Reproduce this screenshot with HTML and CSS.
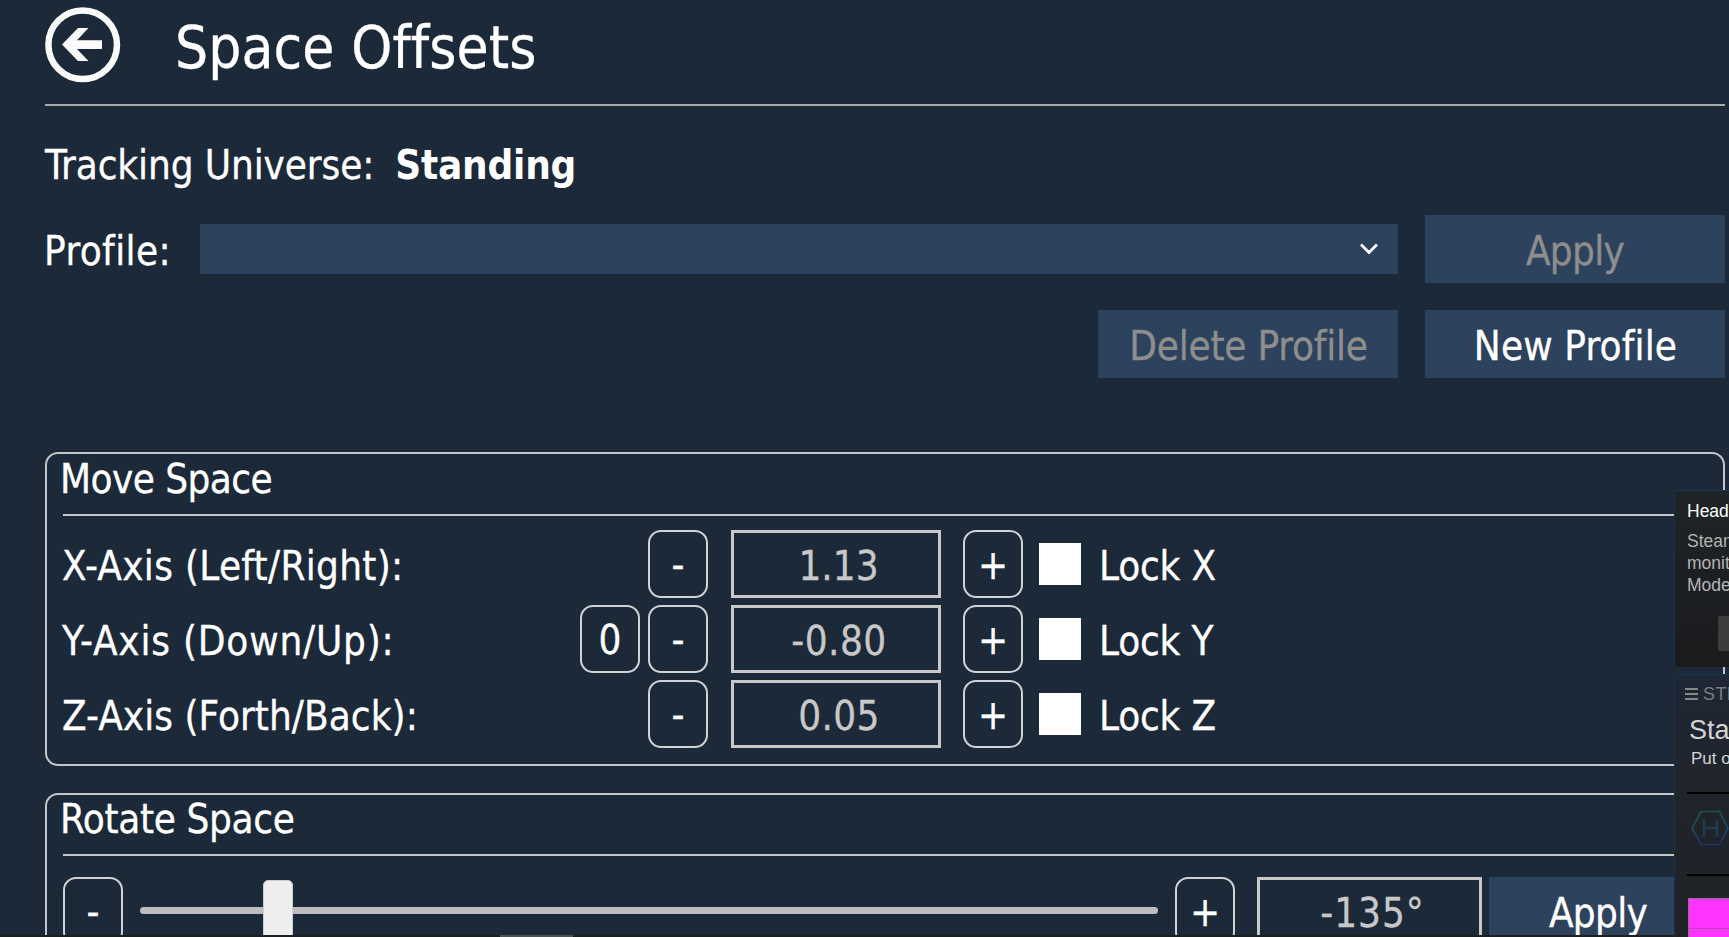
FILE: index.html
```html
<!DOCTYPE html>
<html lang="en">
<head>
<meta charset="utf-8">
<title>Space Offsets</title>
<link rel="stylesheet" href="styles.css">
</head>
<body>
<main class="page">
  <header class="header">
    <svg class="back" viewBox="0 0 76 76"><circle cx="37.7" cy="37.7" r="34.3" fill="none" stroke="#fafafa" stroke-width="6.500"/><path d="M17 37.500 33 21H43.500L32 33.300H57V42H32L43.500 54H33Z" fill="#fafafa"/></svg>
    <h1 class="title">Space Offsets</h1>
  </header>
  <section class="universe"><span>Tracking Universe:</span><b class="mode">Standing</b></section>
  <section class="profile">
    <span class="profile-label">Profile:</span>
    <div class="select"><svg class="chevron" viewBox="0 0 20 14"><path d="M2 2.500 10 10.500 18 2.500" fill="none" stroke="#fff" stroke-width="2.800"/></svg></div>
    <div class="btn off apply">Apply</div>
  </section>
  <section class="profile-actions">
    <div class="btn off delete">Delete Profile</div>
    <div class="btn new">New Profile</div>
  </section>

  <section class="group move">
    <h2 class="group-title move-title">Move Space</h2>
    <div class="row">
      <span class="axis axis-x">X-Axis (Left/Right):</span><div class="key minus">-</div><div class="field fx">1.13</div><div class="key">+</div><i class="check"></i><span class="lock">Lock X</span>
    </div>
    <div class="row">
      <span class="axis axis-y">Y-Axis (Down/Up):</span><div class="key zero">0</div><div class="key minus">-</div><div class="field fy">-0.80</div><div class="key">+</div><i class="check"></i><span class="lock">Lock Y</span>
    </div>
    <div class="row">
      <span class="axis axis-z">Z-Axis (Forth/Back):</span><div class="key minus">-</div><div class="field fz">0.05</div><div class="key">+</div><i class="check"></i><span class="lock">Lock Z</span>
    </div>
  </section>

  <section class="group rotate">
    <h2 class="group-title rotate-title">Rotate Space</h2>
    <div class="row">
      <div class="key minus">-</div>
      <div class="slider"><i class="track"></i><i class="thumb"></i></div>
      <div class="key">+</div>
      <div class="field degrees">-135°</div>
      <div class="btn rotate-apply">Apply</div>
    </div>
  </section>
</main>

<aside class="notice">
  <h3 class="notice-title">Head</h3>
  <p class="notice-text">Steam<br>monit<br>Mode</p>
  <div class="notice-btn"></div>
</aside>

<aside class="status">
  <div class="status-bar">
    <svg class="burger" viewBox="0 0 13 12"><path d="M0 1H13M0 6H13M0 11H13" stroke="#858585" stroke-width="2"/></svg>
    <span>STE</span>
  </div>
  <div class="status-title">Sta</div>
  <div class="status-text">Put o</div>
  <div class="device">
    <svg class="hex" viewBox="0 0 38 37">
      <defs><linearGradient id="g" x1="0.3" y1="0" x2="0.5" y2="1"><stop offset="0" stop-color="#1f5140"/><stop offset=".5" stop-color="#1c4a5c"/><stop offset="1" stop-color="#20306b"/></linearGradient></defs>
      <path d="M10 1.500H28.500L37 18.500 28.500 34.500H10L1 18.500Z" fill="none" stroke="url(#g)" stroke-width="1.700"/>
      <path d="M13 9V27M26 9V27M13 18H26" fill="none" stroke="#1b3e4c" stroke-width="2.600"/>
    </svg>
  </div>
  <div class="swatch"></div>
</aside>

<footer class="scrollbar"><i class="scroll-thumb"></i></footer>
</body>
</html>
```

FILE: styles.css
```css
* { box-sizing: border-box; }
body {
  margin: 0;
  width: 1729px;
  height: 937px;
  overflow: hidden;
  position: relative;
  background: #1c2938;
  color: #fff;
  font: 40px/48px "DejaVu Sans Condensed", "DejaVu Sans", sans-serif;
  font-variant-ligatures: none;
  white-space: nowrap;
}
h1, h2, h3, p { margin: 0; font-weight: normal; }
i { display: block; }

.page { width: 1725px; height: 937px; overflow: hidden; padding-left: 45px; -webkit-text-stroke: 0.3px; }

.header { height: 106px; display: flex; padding-top: 7px; border-bottom: 2px solid #a3a9b0; }
.back { width: 76px; height: 76px; flex: none; }
.title { margin-left: 54px; font-size: 58px; line-height: 82px; letter-spacing: 0.1px; }

.universe { display: flex; padding-top: 35px; height: 109px; line-height: 49px; letter-spacing: -0.1px; }
.mode { margin-left: 21px; letter-spacing: -0.2px; -webkit-text-stroke: 0; }

.profile { display: flex; align-items: center; height: 68px; }
.profile-label { width: 154px; padding-top: 3px; margin-left: -1px; letter-spacing: 0.4px; }
.select {
  width: 1198px;
  height: 50px;
  margin-left: 2px;
  margin-right: 27px;
  padding-right: 19px;
  background: #2d425c;
  display: flex;
  align-items: center;
  justify-content: flex-end;
}
.chevron { width: 20px; height: 14px; }
.btn {
  width: 300px;
  height: 68px;
  flex: none;
  padding-top: 4px;
  line-height: 65px;
  text-align: center;
  background: #2d425c;
}
.off { color: #8e8e8e; }
.apply { letter-spacing: -0.7px; }
.delete { letter-spacing: -0.2px; text-indent: 1px; }
.new { letter-spacing: 0.15px; text-indent: 1px; }
.profile-actions { display: flex; justify-content: flex-end; gap: 27px; margin-top: 27px; }

.group {
  border: 2px solid #c3c7cb;
  border-radius: 13px;
  padding: 0 16px;
}
.move { height: 314px; margin-top: 74px; }
.rotate { height: 300px; margin-top: 27px; }
.group-title {
  height: 62px;
  line-height: 50px;
  margin-bottom: 14px;
  border-bottom: 2px solid #c3c7cb;
  font-size: 40px;
  text-indent: -3px;
}
.move-title { letter-spacing: -0.55px; }
.rotate-title { letter-spacing: -0.35px; line-height: 49px; height: 61px; margin-bottom: 21px; }

.row { display: flex; align-items: center; height: 68px; margin-bottom: 7px; }
.axis { flex: none; width: 585px; padding-top: 3px; margin-left: -1px; margin-right: 1px; }
.axis-x { letter-spacing: 0.3px; }
.axis-y { width: 517px; letter-spacing: 0.8px; }
.axis-z { letter-spacing: 0.05px; }
.key {
  width: 60px;
  height: 68px;
  flex: none;
  border: 2px solid #d0d3d6;
  border-radius: 13px;
  line-height: 67px;
  text-align: center;
}
.zero { margin-right: 8px; }
.field {
  width: 210px;
  height: 68px;
  flex: none;
  margin: 0 22px 0 23px;
  border: 3px solid #c8c8c8;
  color: #c8c8c8;
  line-height: 66px;
  text-align: center;
}
.fx { padding-left: 5px; }
.fy { letter-spacing: 0.45px; padding-left: 6px; }
.fz { letter-spacing: 0.4px; padding-left: 6px; }
.check { width: 42px; height: 42px; flex: none; margin: 0 17px 0 16px; background: #fff; }
.lock { padding-top: 3px; margin-left: 1px; letter-spacing: -0.2px; }

.slider { width: 1018px; height: 68px; margin: 0 17px 0 17px; position: relative; padding-top: 30px; flex: none; }
.track { height: 7px; border-radius: 4px; background: #bdbdbf; }
.thumb {
  position: absolute;
  left: 123px;
  top: 3px;
  width: 30px;
  height: 62px;
  border-radius: 5px;
  background: #eee;
  border: 1px solid #cfcfcf;
}
.degrees { width: 225px; margin: 0 7px 0 22px; padding-left: 6px; letter-spacing: 1px; }
.rotate-apply { width: 218px; letter-spacing: -0.7px; }

/* Overlay windows */
.notice, .status {
  position: absolute;
  left: 1674px;
  width: 55px;
  overflow: hidden;
  font-family: "Liberation Sans", Arial, sans-serif;
}
.notice {
  top: 490px;
  height: 177px;
  padding: 10px 0 0 12px;
  border-top: 1px solid #17324c;
  border-left: 1px solid #1b3046;
  background: linear-gradient(#1e2427, #1b1b1d);
}
.notice-title { font-size: 17.500px; line-height: 20px; }
.notice-text { margin-top: 9px; font-size: 17.500px; line-height: 22px; color: #b4b4b4; }
.notice-btn { width: 40px; height: 35px; margin: 20px 0 0 31px; border-radius: 2px 0 0 2px; background: #3d3d3d; }

.status {
  top: 674px;
  height: 263px;
  border-top: 1px solid #17324c;
  border-left: 1px solid #1b3046;
  background: linear-gradient(#1e2735, #20242b 45%, #202226);
}
.status-bar { display: flex; align-items: center; gap: 5px; padding: 9px 0 0 10px; height: 29px; font-size: 18px; line-height: 20px; letter-spacing: 0.4px; color: #7d7d7d; }
.burger { width: 13px; height: 12px; flex: none; }
.status-title { height: 39px; padding-left: 14px; font-size: 27px; line-height: 53px; color: #d4d4d4; }
.status-text { padding-left: 16px; font-size: 17px; line-height: 32px; color: #d4d4d4; }
.device { margin: 17px 0 0 12px; height: 84px; padding: 16px 0 0 4px; border-top: 2px solid #000; border-bottom: 2px solid #000; }
.hex { width: 38px; height: 37px; display: block; }
.swatch {
  margin: 22px 0 0 13px;
  height: 60px;
  border: 1px solid #8c738c;
  border-right: 0;
  background: linear-gradient(#ff35ff 29px, #b04cb4 29px, #b04cb4 30px, #ff35ff 30px);
}

.scrollbar { position: absolute; left: 0; bottom: 0; width: 1674px; height: 2px; background: #1c2023; }
.scroll-thumb { width: 73px; height: 2px; margin-left: 500px; background: #505356; }
```
